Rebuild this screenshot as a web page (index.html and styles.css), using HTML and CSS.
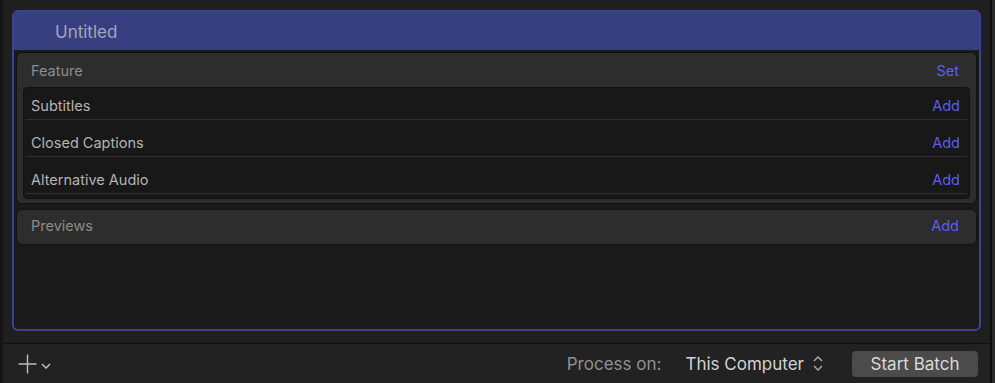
FILE: index.html
```html
<!DOCTYPE html>
<html lang="en">
<head>
    <meta charset="UTF-8">
    <title>Batch</title>
    <link rel="stylesheet" href="styles.css">
</head>
<body>

<div class="window">
    <div class="main">
        <!-- Batch card -->
        <div class="batch">
            <div class="batch-head">Untitled</div>
            <div class="batch-body">
                <div class="group">
                    <div class="group-head">
                        <span>Feature</span>
                        <span class="link">Set</span>
                    </div>
                    <div class="list">
                        <div class="row"><span>Subtitles</span><span class="link">Add</span></div>
                        <div class="row"><span>Closed Captions</span><span class="link">Add</span></div>
                        <div class="row"><span>Alternative Audio</span><span class="link">Add</span></div>
                    </div>
                </div>
                <div class="group previews">
                    <div class="group-head">
                        <span>Previews</span>
                        <span class="link">Add</span>
                    </div>
                </div>
            </div>
        </div>
    </div>

    <!-- Bottom toolbar -->
    <div class="toolbar">
        <div class="add-menu">
            <svg width="19" height="20" viewBox="0 0 19 20"><path d="M9.5 0.5v19M0.5 10h18" stroke="#bdbdbd" stroke-width="1.4" fill="none"/></svg>
            <svg width="10" height="6" viewBox="0 0 10 6"><path d="M1 1l4 4 4-4" stroke="#bdbdbd" stroke-width="1.5" fill="none"/></svg>
        </div>
        <div class="process">
            <span class="process-label">Process on:</span>
            <span class="process-value">This Computer</span>
            <svg width="12" height="17" viewBox="0 0 12 17"><path d="M2 6l4-4 4 4M2 11l4 4 4-4" stroke="#b0b0b0" stroke-width="1.3" fill="none"/></svg>
        </div>
        <button class="start">Start Batch</button>
    </div>
</div>

</body>
</html>
```

FILE: styles.css
```css
/* General */
body {
    margin: 0;
    background: #1f1f1f;
    font-family: "Inter", "Liberation Sans", sans-serif;
}
.window {
    width: 995px;
    height: 383px;
    box-sizing: border-box;
    border-left: 3px solid #151515;
    border-right: 3px solid #2a2a2a;
    background: #1f1f1f;
    display: flex;
    flex-direction: column;
    position: relative;
}
.window::after {
    content: "";
    position: absolute;
    top: 0;
    bottom: 0;
    right: 0;
    width: 2px;
    background: #0e0e0e;
}
.main {
    height: 343px;
    padding: 10px 11px 0 9px;
    box-sizing: border-box;
}

/* Batch card */
.batch {
    height: 321px;
    border: 2px solid #3c4491;
    border-radius: 6px;
    background: #1a1a1a;
    box-sizing: border-box;
    display: flex;
    flex-direction: column;
    overflow: hidden;
}
.batch-head {
    height: 38px;
    background: #383f80;
    color: #a3a5bd;
    font-size: 17px;
    padding-left: 41px;
    line-height: 40px;
    flex-shrink: 0;
}
.batch-body {
    padding: 2px 2px 0;
    display: flex;
    flex-direction: column;
    gap: 5px;
}

/* Groups */
.group {
    background: #2d2d2d;
    border: 1px solid #121212;
    border-radius: 6px;
    padding-bottom: 4px;
}
.group-head {
    height: 34px;
    display: flex;
    justify-content: space-between;
    align-items: center;
    padding: 0 17px 0 14px;
    font-size: 14.5px;
    color: #8c8c8c;
}
.link { color: #5d5df0; }
.previews { padding-bottom: 0; }
.previews .group-head {
    height: 31px;
    padding-bottom: 3px;
}

.list {
    margin: 0 6px;
    background: #181818;
    border: 1px solid #111;
    border-radius: 4px;
    padding: 0 2px 4px;
}
.row {
    height: 28px;
    padding: 8px 7px 0 5px;
    display: flex;
    justify-content: space-between;
    align-items: center;
    border-bottom: 1px solid #2f2f2f;
    font-size: 14.5px;
    color: #b3b3b3;
}
.row:first-child { padding-top: 3px; }

/* Toolbar */
.toolbar {
    flex: 1;
    border-top: 1px solid #111;
    background: #222;
    display: flex;
    align-items: center;
    padding: 0 14px 0 15px;
}
.add-menu {
    display: flex;
    align-items: center;
    gap: 4px;
}
.add-menu svg:last-child { margin-top: 5px; }
.process {
    margin-left: auto;
    display: flex;
    align-items: center;
    font-size: 17px;
}
.process-label { color: #909090; margin-right: 24px; }
.process-value { color: #d2d2d2; margin-right: 8px; }
.start {
    margin-left: 28px;
    width: 126px;
    height: 26px;
    border: none;
    border-radius: 4px;
    background: #4b4b4b;
    color: #d9d9d9;
    font-family: inherit;
    font-size: 17px;
    padding: 0;
}
```
